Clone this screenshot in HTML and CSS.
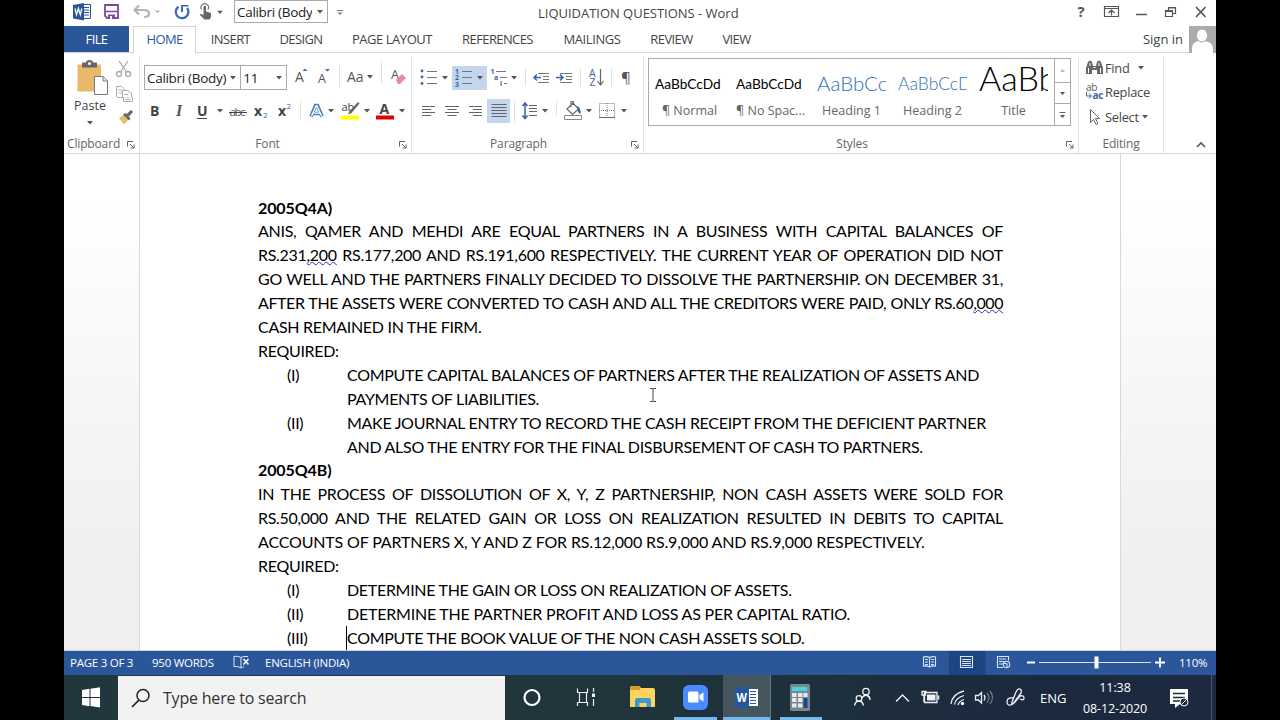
FILE: index.html
```html
<!DOCTYPE html>
<html>
<head>
	<meta charset="utf-8" />
	<title>LIQUIDATION QUESTIONS - Word</title>
	<link rel="stylesheet" href="styles.css">
</head>
<body>
	<svg class="defs">
		<symbol id="caret" viewBox="0 0 6 4"><path d="M0 0h6L3 3.6z" fill="#555"/></symbol>
		<symbol id="launcher" viewBox="0 0 8 8"><path d="M.5 5.500V.5H6M3 3l4 4M7 3.500V7H3.500" fill="none" stroke="#666"/></symbol>
	</svg>
	<div id="app">
		<!-- title bar -->
		<div class="titlebar">
			<svg width="170" height="26" viewBox="64 0 170 26">
				<path d="M83 4.500h7.500v14H83z" fill="#fff" stroke="#2b579a"/>
				<path d="M84 7.500h5M84 10h5M84 12.500h5M84 15h5" stroke="#2b579a"/>
				<path d="M73 5l11-2v17.500l-11-2z" fill="#2b579a"/>
				<path d="M75 8.500l1.500 6 1.900-6 1.900 6 1.500-6" fill="none" stroke="#fff" stroke-width="1.300"/>
				<path d="M105 5h13v13h-11l-2-2z" fill="#fff" stroke="#80489c" stroke-width="1.800"/>
				<path d="M105 11.500h13" stroke="#80489c" stroke-width="1.500"/>
				<path d="M108 14.500h7v4h-7z" fill="#80489c"/><path d="M110 16h2v3h-2z" fill="#fff"/>
				<path d="M139 5.500l-4.500 4.500 4.500 4.500M135 10h8q6 0 6 3.500T144 17" fill="none" stroke="#b3b3b3" stroke-width="2.200"/>
				<path d="M155 10.500h5l-2.500 2.800z" fill="#b3b3b3"/>
				<path d="M178.500 6.700A6.300 6.300 0 1 0 187 8" fill="none" stroke="#3a6db0" stroke-width="2.300"/>
				<path d="M181 5h7.500v1.500h-5.500v5.500h-2z" fill="#3a6db0"/>
				<path d="M201.500 9.500a3.800 3.800 0 1 1 6.500 0" fill="none" stroke="#777" stroke-width="1.200"/>
				<path d="M203.500 6.500q1.300-1.300 2.500 0v5l5 1.500v4l-1.500 2.500h-5l-5-5q1-1.200 4 .5z" fill="#666"/>
				<use href="#caret" x="217" y="10.500" width="6" height="4"/>
			</svg>
			<div class="combo qat-font"><span>Calibri (Body</span><svg width="6" height="4"><use href="#caret"/></svg></div>
			<svg width="24" height="26" viewBox="328 0 24 26"><path d="M337 10.500h6" stroke="#777"/><path d="M337.500 12.500h5L340 15z" fill="#777"/></svg>
			<div class="doc-title">LIQUIDATION QUESTIONS - Word</div>
			<svg width="146" height="26" viewBox="1070 0 146 26">
				<text x="1077.500" y="17" class="help">?</text>
				<g fill="none" stroke="#555">
					<path d="M1104.500 6.500h14v10h-14zM1104.500 8.500h14M1111.500 15.500v-5M1108.500 13l3-3 3 3" stroke-width="1.200"/>
					<path d="M1136 14.500h11" stroke-width="1.500"/>
					<path d="M1165.500 10.500h7v6h-7zM1165.500 11.500h7M1168.500 10V7.500h7v6h-3M1168.500 8h7" stroke-width="1.200"/>
					<path d="M1196 7l9.500 10M1205.500 7l-9.500 10" stroke-width="1.700"/>
				</g>
			</svg>
		</div>

		<!-- ribbon tabs -->
		<div class="tabs">
			<div class="tab file">FILE</div>
			<div class="tab home">HOME</div>
			<div class="tab t-insert">INSERT</div>
			<div class="tab t-design">DESIGN</div>
			<div class="tab t-layout">PAGE LAYOUT</div>
			<div class="tab t-ref">REFERENCES</div>
			<div class="tab t-mail">MAILINGS</div>
			<div class="tab t-review">REVIEW</div>
			<div class="tab t-view">VIEW</div>
			<div class="signin">Sign in</div>
			<svg width="27" height="27" viewBox="0 0 27 27"><path d="M0 0h27v27H0z" fill="#ababab"/><path d="M3 27v-5q0-6 7-7h6q8 1 8 8v4z" fill="#fff"/><ellipse cx="13" cy="9.500" rx="5.500" ry="6.500" fill="#fff" stroke="#ababab"/></svg>
		</div>

		<!-- ribbon -->
		<div class="ribbon">
			<div class="group clipboard">
				<svg width="75" height="42" viewBox="64 55 75 42">
					<path d="M77.500 64.500h23.500v27H77.500z" fill="#e8b968"/>
					<path d="M82 67.500v-5h4q0-2.500 3.500-2.500t3.500 2.500h4v5z" fill="#666"/><circle cx="89.500" cy="63.500" r="1.500" fill="#fff"/>
					<path d="M94.500 76.500h8.500l4.500 4.500v13.500h-13zM103 76.500v4.500h4.500" fill="#fff" stroke="#777"/>
					<g fill="none" stroke="#aaa" stroke-width="1.300"><path d="M119 61l7.500 11M128 61l-7.500 11"/><circle cx="119" cy="74" r="2.500"/><circle cx="128" cy="74" r="2.500"/></g>
					<path d="M116.500 97v-10.500h5l3 3v7.500M118.500 90h4M118.500 93h4" fill="#fff" stroke="#aaa"/>
					<path d="M122.500 98v-7.500h5l4 3v5M124.500 94.500h4" fill="#fff" stroke="#aaa"/>
				</svg>
				<div class="paste-row"><span>Paste</span>
					<svg width="24" height="34" viewBox="114 97 24 34">
						<path d="M116.500 97v.5h5.500M122.500 97v4.500h9V97M124.500 97h5M124.500 99.500h5" fill="none" stroke="#aaa"/>
						<path d="M118 118l5-3.500 5 4.500-5 5.500z" fill="#e3bd6c"/><path d="M122 114.500l6 6 1.500-2-5-5.500zM125.500 114l4.500-4 2 2-4 4.500z" fill="#666"/>
					</svg>
				</div>
				<svg class="paste-caret" width="6" height="4"><use href="#caret"/></svg>
				<div class="label">Clipboard<svg width="8" height="8"><use href="#launcher"/></svg></div>
			</div>

			<div class="group font">
				<div class="row row1">
					<div class="combo face"><span>Calibri (Body)</span><svg width="6" height="4"><use href="#caret"/></svg></div>
					<div class="combo size"><span>11</span><svg width="6" height="4"><use href="#caret"/></svg></div>
					<svg width="124" height="32" viewBox="287 62 124 32">
						<text x="295" y="83" class="ic">A</text><path d="M302.500 72h5l-2.500-2.500z" fill="#3a6db0"/>
						<text x="318" y="84" class="ic sm">A</text><path d="M325 70h5l-2.500 2.500z" fill="#3a6db0"/>
						<path d="M339.500 67v21M381.500 63v22" stroke="#e1e1e1"/>
						<text x="347" y="82.500" class="ic">Aa</text><use href="#caret" x="367" y="76" width="6" height="4"/>
						<text x="391" y="80" class="ic sm">A</text>
						<path d="M396 81l6-6 4 4-6 6h-2z" fill="#e8899f"/>
					</svg>
				</div>
				<div class="row row2">
					<svg width="271" height="32" viewBox="140 95 271 32">
						<text x="150" y="116" class="ic b">B</text>
						<text x="176" y="116" class="ic i">I</text>
						<text x="197" y="116" class="ic b">U</text><path d="M197 118.500h10" stroke="#444"/>
						<use href="#caret" x="217" y="109" width="6" height="4"/>
						<text x="229.500" y="116" class="ic abc" textLength="16">abc</text><path d="M229 112.500h18" stroke="#444"/>
						<text x="254" y="115.500" class="ic b">x</text><text x="263" y="118" class="tiny blue">2</text>
						<text x="278" y="115.500" class="ic b">x</text><text x="286.500" y="109" class="tiny blue">2</text>
						<path d="M300.500 101v18" stroke="#e1e1e1"/>
						<path d="M311 116.500l4.500-11h2l4.500 11M313 113.500h7" fill="none" stroke="#4a80bd" stroke-width="3.600"/>
						<path d="M311.500 116l4.500-10h1l4.500 10M313 113.200h7" fill="none" stroke="#fff" stroke-width="1.300"/>
						<use href="#caret" x="328" y="109" width="6" height="4"/>
						<text x="341.500" y="111" class="ab">ab</text>
						<path d="M358 102l1.500 1.500-8 9.500-3.500 1.500 1.500-3.500z" fill="#666"/>
						<path d="M341 115.500h18v4h-18z" fill="#ff0"/>
						<use href="#caret" x="364" y="109" width="6" height="4"/>
						<text x="379.500" y="114" class="ic b">A</text><path d="M376 115.500h18v4h-18z" fill="#e60000"/>
						<use href="#caret" x="399" y="109" width="6" height="4"/>
					</svg>
				</div>
				<div class="label">Font<svg width="8" height="8"><use href="#launcher"/></svg></div>
			</div>

			<div class="group para">
				<svg width="231" height="74" viewBox="412 55 231 74">
					<path d="M452 66h35v24h-35zM487 99h23v24h-23z" fill="#c4d5ee"/>
					<g fill="#3f64a5"><circle cx="422" cy="71" r="1.400"/><circle cx="422" cy="77" r="1.400"/><circle cx="422" cy="83.500" r="1.400"/></g>
					<path d="M427 71.500h10M427 77.500h10M427 83.500h10M462 71.500h10M462 77.500h10M462 83.500h10M496 71.500h10M500 77.500h7M504 83.500h3" stroke="#777"/>
					<text x="455" y="73.500" class="num">1</text><text x="455" y="80" class="num">2</text><text x="455" y="86.500" class="num">3</text>
					<text x="490.500" y="74" class="num">1</text><text x="494" y="80" class="num">a</text><text x="500" y="86" class="num">i</text>
					<use href="#caret" x="442" y="76" width="6" height="4"/><use href="#caret" x="477" y="76" width="6" height="4"/><use href="#caret" x="511" y="76" width="6" height="4"/>
					<path d="M525.500 68v18M580.500 68v18M611.500 68v18M514.500 101v22M556.500 101v15" stroke="#e1e1e1"/>
					<path d="M538 73.500h11M543 76.500h6M543 79.500h6M538 82.500h11M560 73.500h12M566 76.500h6M566 79.500h6M560 82.500h12" stroke="#777"/>
					<path d="M534 77.500h7M537 74.500l-3 3 3 3M556 77.500h7M560 74.500l3 3-3 3" fill="none" stroke="#3a64a5" stroke-width="1.500"/>
					<text x="589" y="77" class="az">A</text><text x="589.500" y="86" class="az">Z</text>
					<path d="M600.500 69v15M597.500 81l3 4 3-4" fill="none" stroke="#666" stroke-width="1.200"/>
					<text x="621" y="83" class="pil">¶</text>
					<g stroke="#666">
						<path d="M422 106.500h13M422 109.500h9M422 112.500h13M422 115.500h9M445 106.500h14M447.500 109.500h9M445 112.500h14M447.500 115.500h9M469 106.500h13M473 109.500h9M469 112.500h13M473 115.500h9"/>
						<path d="M491.500 104.500h15M491.500 107.500h15M491.500 110.500h15M491.500 113.500h15M491.500 116.500h15"/>
						<path d="M529 105.500h8M529 108.500h8M529 111.500h8M529 115.500h8"/>
					</g>
					<path d="M525 103v15M522.500 106l2.500-3 2.500 3M522.500 115.500l2.500 3 2.500-3" fill="none" stroke="#3a64a5" stroke-width="1.500"/>
					<use href="#caret" x="542" y="109" width="6" height="4"/>
					<path d="M567 109l6-6 5.500 6-6 5.500zM571 107v-5q1.500-1.500 2.500 0v3" fill="#fff" stroke="#666" stroke-width="1.200"/>
					<path d="M577 106q4 1 3.500 8-3-1-3-5z" fill="#3f64a5"/>
					<path d="M564.500 115.500h17v4h-17z" fill="#fff" stroke="#888"/>
					<use href="#caret" x="586" y="109" width="6" height="4"/>
					<path d="M599.500 103.500h15v14h-15zM607 103v14M599 110.500h16" fill="none" stroke="#777" stroke-dasharray="1 1"/><path d="M599 117.500h16" stroke="#666"/>
					<use href="#caret" x="621" y="109" width="6" height="4"/>
				</svg>
				<div class="label">Paragraph<svg width="8" height="8"><use href="#launcher"/></svg></div>
			</div>

			<div class="group styles">
				<div class="gallery">
					<div class="style"><div class="sample">AaBbCcDd</div><div class="name">¶ Normal</div></div>
					<div class="style"><div class="sample">AaBbCcDd</div><div class="name">¶ No Spac...</div></div>
					<div class="style"><div class="sample h1">AaBbCc</div><div class="name">Heading 1</div></div>
					<div class="style"><div class="sample h2">AaBbCcD</div><div class="name">Heading 2</div></div>
					<div class="style"><div class="sample ttl">AaBb</div><div class="name">Title</div></div>
					<svg width="16" height="66" viewBox="0 0 16 66"><path d="M.5 0v66M0 23.500h16M0 44.500h16" stroke="#ababab"/><path d="M6 13h5l-2.500-3z" fill="#bbb"/><path d="M6 33h5l-2.500 3zM6 56h5l-2.500 3z" fill="#555"/><path d="M5.500 53.500h6" stroke="#666"/></svg>
				</div>
				<div class="label">Styles<svg width="8" height="8"><use href="#launcher"/></svg></div>
			</div>

			<div class="group editing">
				<div class="cmd">
					<svg width="19" height="16" viewBox="0 0 19 16"><path d="M3 2q2-3 4 0l1 4h3l1-4q2-3 4 0l2 6v6h-6v-4H7v4H1V8z" fill="#666"/><path d="M3.500 8v5M15.500 8v5M8.500 7.500h2M5 3v3M14 3v3" stroke="#fff"/></svg>
					<span>Find</span><svg width="6" height="4"><use href="#caret"/></svg>
				</div>
				<div class="cmd">
					<svg width="19" height="18" viewBox="0 0 19 18"><text x="1" y="8" class="rep">ab</text><text x="7.500" y="16" class="rep blue">ac</text><path d="M1.500 9v4H6M4 10.500l2.500 2.500L4 15.500" fill="none" stroke="#3a64a5"/></svg>
					<span>Replace</span>
				</div>
				<div class="cmd">
					<svg width="19" height="18" viewBox="0 0 19 18"><path d="M5.500 1.500v13l3-3 2.500 5 2-1-2.500-5h4z" fill="#fff" stroke="#666"/></svg>
					<span class="sel">Select</span><svg width="6" height="4"><use href="#caret"/></svg>
				</div>
				<div class="label">Editing</div>
			</div>
			<svg class="collapse" width="10" height="7" viewBox="0 0 10 7"><path d="M1 6l4-4 4 4" fill="none" stroke="#555" stroke-width="1.600"/></svg>
		</div>

		<!-- document -->
		<div class="workspace">
			<div class="page">
				<h2>2005Q4A)</h2>
				<p class="full">ANIS, QAMER AND MEHDI ARE EQUAL PARTNERS IN A BUSINESS WITH CAPITAL BALANCES OF</p>
				<p class="full">RS.231<u>,200</u> RS.177,200 AND RS.191,600 RESPECTIVELY. THE CURRENT YEAR OF OPERATION DID NOT</p>
				<p class="full">GO WELL AND THE PARTNERS FINALLY DECIDED TO DISSOLVE THE PARTNERSHIP. ON DECEMBER 31,</p>
				<p class="full tight">AFTER THE ASSETS WERE CONVERTED TO CASH AND ALL THE CREDITORS WERE PAID, ONLY RS.60<u>,000</u></p>
				<p>CASH REMAINED IN THE FIRM.</p>
				<p>REQUIRED:</p>
				<div class="item"><span>(I)</span><p>COMPUTE CAPITAL BALANCES OF PARTNERS AFTER THE REALIZATION OF ASSETS AND<br>PAYMENTS OF LIABILITIES.</p></div>
				<div class="item"><span>(II)</span><p>MAKE JOURNAL ENTRY TO RECORD THE CASH RECEIPT FROM THE DEFICIENT PARTNER<br>AND ALSO THE ENTRY FOR THE FINAL DISBURSEMENT OF CASH TO PARTNERS.</p></div>
				<h2>2005Q4B)</h2>
				<p class="full">IN THE PROCESS OF DISSOLUTION OF X, Y, Z PARTNERSHIP, NON CASH ASSETS WERE SOLD FOR</p>
				<p class="full">RS.50,000 AND THE RELATED GAIN OR LOSS ON REALIZATION RESULTED IN DEBITS TO CAPITAL</p>
				<p class="loose">ACCOUNTS OF PARTNERS X, Y AND Z FOR RS.12,000 RS.9,000 AND RS.9,000 RESPECTIVELY.</p>
				<p>REQUIRED:</p>
				<div class="item"><span>(I)</span><p>DETERMINE THE GAIN OR LOSS ON REALIZATION OF ASSETS.</p></div>
				<div class="item"><span>(II)</span><p class="loose2">DETERMINE THE PARTNER PROFIT AND LOSS AS PER CAPITAL RATIO.</p></div>
				<div class="item"><span>(III)</span><p class="caret-line">COMPUTE THE BOOK VALUE OF THE NON CASH ASSETS SOLD.</p></div>
			</div>
			<svg class="ibeam" width="8" height="16" viewBox="0 0 8 16"><path d="M1 1.500h2.500L4 2l.5-.5H7M1 14.500h2.500L4 14l.5.500H7M4 2v12" fill="none" stroke="#444"/></svg>
		</div>

		<!-- status bar -->
		<div class="status">
			<span class="s-page">PAGE 3 OF 3</span>
			<span class="s-words">950 WORDS</span>
			<svg class="s-proof" width="17" height="14" viewBox="0 0 17 14"><path d="M8 2.500Q5 .5 1 1.500v10q4-.5 7 1.500 1-1 3-1.300M8 2.500V13M8 2.500Q10 1 15 1.500" fill="none" stroke="#dce6f5"/><path d="M10.500 4l5 5.500M15.500 4l-5 5.500" stroke="#fff" stroke-width="1.500"/></svg>
			<span class="s-lang">ENGLISH (INDIA)</span>
			<svg class="views" width="267" height="24" viewBox="911 651 267 24">
				<path d="M949 651h36.500v24H949z" fill="#1d4583"/>
				<g fill="none" stroke="#d7e4f7" stroke-width="1.100">
					<path d="M929.500 657.500q-3-1.500-6-.5v9q3-.5 6 1 3-1.500 6-1v-9q-3-1-6 .5v10M925 659.500h3M925 662h3M925 664.500h3M931 659.500h3M931 662h3M931 664.500h3"/>
					<path d="M960.500 656.500h12v11h-12zM962 659.500h9M962 661.500h9M962 663.500h9M962 665.500h9"/>
					<path d="M1003 667.500h-5.500v-11h11v4M999 659h7M999 661.500h5M999 664h4"/>
					<circle cx="1006.500" cy="664.500" r="3.200"/><path d="M1004 663l3 1v3"/>
					<path d="M1039 662.500h112"/>
				</g>
				<path d="M1027 662.500h8M1155 662.500h10M1160 657.500v10" stroke="#fff" stroke-width="1.800"/>
				<path d="M1094.500 656.500h4v12h-4z" fill="#fff"/>
			</svg>
			<span class="zoom">110%</span>
		</div>

		<!-- windows taskbar -->
		<div class="taskbar">
			<svg width="54" height="45" viewBox="64 675 54 45"><path d="M82 690l7.500-1.200v8.200H82zM90.500 688.700l9.500-1.400v9.700h-9.500zM82 698h7.500v8.200L82 705zM90.500 698h9.500v9.500l-9.500-1.400z" fill="#fff"/></svg>
			<div class="search">
				<svg width="20" height="20" viewBox="0 0 20 20"><circle cx="12" cy="7.500" r="6" fill="none" stroke="#222" stroke-width="1.500"/><path d="M8 12l-7 7" stroke="#222" stroke-width="1.700"/></svg>
				<span>Type here to search</span>
			</div>
			<svg width="535" height="45" viewBox="505 675 535 45">
				<circle cx="532" cy="697.500" r="7.500" fill="none" stroke="#fff" stroke-width="2.200"/>
				<g fill="none" stroke="#e8eef0" stroke-width="1.200">
					<path d="M577 692.500h11M577 702.500h11M579.500 692.500v10M586.500 692.500v10M577.500 688.500v4M587.500 688.500v4M577.500 702.500v3.500M587.500 702.500v3.500M593.500 688v4M593.500 699v7"/><path d="M593.500 693.500v3.500" stroke-width="3"/>
				</g>
				<path d="M630 688q0-2 2-2h7l2 2h12q2 0 2 2v17h-25z" fill="#ffd45e"/><path d="M630 688q0-2 2-2h7l2 2-2 2h-9z" fill="#d79c22"/>
				<path d="M635 707v-7q0-2 2-2h12q2 0 2 2v7h-4.500v-4h-7v4z" fill="#4297cb"/>
				<rect x="683" y="685" width="25" height="25" rx="6" fill="#4a8cff"/>
				<path d="M688 693q0-1.500 1.500-1.500h7.500q1.500 0 1.500 1.500v9.500h-9q-1.500 0-1.500-1.500zM699.500 695l4-2.500v9l-4-2.500z" fill="#fff"/>
				<path d="M723 675h47v45h-47z" fill="#46565f"/><path d="M770.500 675v45" stroke="#65737a"/>
				<path d="M748 689h10v17h-10z" fill="#fff"/><path d="M750 691.500h6M750 694.500h6M750 697.500h6M750 700.500h6M750 703.500h6" stroke="#2b579a"/>
				<path d="M735 688.500l14-2.500v23l-14-2.500z" fill="#2855a0"/><text x="736.500" y="702" class="w" textLength="10.500" lengthAdjust="spacingAndGlyphs">W</text>
				<rect x="790" y="684" width="20" height="27" rx="1.500" fill="#7a8790"/><path d="M792 687h15v4h-15z" fill="#4ed0e8"/>
				<path d="M792 693h4.500v4H792zM798 693h4.500v4H798zM803.500 693h4v4h-4zM792 698h4.500v4H792zM798 698h4.500v4H798zM792 703.500h4.500v4H792zM798 703.500h4.500v4H798z" fill="#e6e9eb"/><path d="M803.500 698h4v10h-4z" fill="#174a8a"/>
				<path d="M674 717h43v3h-43zM723 717h47v3h-47zM780 717h42v3h-42z" fill="#76b9ed"/>
				<g fill="none" stroke="#eef2f5" stroke-width="1.300">
					<circle cx="866" cy="691.500" r="3.200"/><path d="M861.500 698q4.500-5.500 8.500 0"/><circle cx="859" cy="698.500" r="2.800"/><path d="M854.500 705.500q1-4.500 4.500-4.500t4.500 4.500"/><path d="M866 695q4 1 4 5"/>
					<path d="M896 701.500l6.500-6.500 6.500 6.500"/>
					<path d="M924.500 692.500h12.500v10h-12.500z"/><path d="M921.500 691.500h5M922 691.500v3.500h3.500v-3.500M924 695v7"/><path d="M938.500 695.500v4" stroke-width="1.500"/>
					<path d="M951 704q1-10 13-13M954.500 704.500q1-6.500 9.500-9M958 705q1-4 6-5.500"/>
					<path d="M975.500 695.500h3l3-3v10.500l-3-3h-3zM984 695q2 2.500 0 5.500"/><path d="M987 693q4 4.500 0 9.500M990 691q5 6.500 0 13" stroke="#6b7b88"/>
					<path d="M1013 698q-6-1-6 4t6 2l8-11q1-3-1-4t-4 3l-4 10q-1 4 3 0l5-6q4-1 4 2t-4 1"/>
				</g>
				<path d="M927 694.500h8.500v6h-8.500z" fill="#eef2f5"/><circle cx="962.500" cy="703.500" r="1.700" fill="#fff"/>
			</svg>
			<span class="lang">ENG</span>
			<div class="clock"><span>11:38</span><span>08-12-2020</span></div>
			<svg width="62" height="45" viewBox="1154 675 62 45"><path d="M1170 689h18v15h-8l-5 4v-4h-5z" fill="#fff"/><path d="M1173 693.500h12M1173 697.500h12M1173 701h7" stroke="#1c2a3d" stroke-width="1.300"/><circle cx="1184" cy="702" r="4" fill="#1c2a3d" stroke="#fff"/><path d="M1181.500 704.500l5-5" stroke="#fff"/><path d="M1211.500 675v45" stroke="#4a5666"/></svg>
		</div>
	</div>
</body>
</html>
```
FILE: styles.css
```css
*{
	margin: 0;
	padding: 0;
	box-sizing: border-box;
}
body{
	background: #000;
	overflow: hidden;
}
svg{
	display: block;
	flex: none;
}
.defs{
	position: absolute;
	width: 0;
	height: 0;
}
#app{
	width: 1152px;
	height: 720px;
	margin: 0 auto;
	background: #fff;
	display: flex;
	flex-direction: column;
	overflow: hidden;
	font-family: "Open Sans", "Noto Sans", sans-serif;
	font-size: 12px;
	color: #444;
	white-space: nowrap;
}
/* title bar */
.titlebar{
	height: 26px;
	display: flex;
}
.combo{
	border: 1px solid #ababab;
	display: flex;
	align-items: center;
	justify-content: space-between;
	padding: 0 4px 0 2px;
	height: 25px;
	color: #222;
	font-size: 13.500px;
	letter-spacing: -0.3px;
}
.combo span{
	overflow: hidden;
}
.qat-font{
	width: 94px;
	height: 23px;
}
.doc-title{
	flex: 1;
	padding-left: 186px;
	line-height: 26px;
	font-size: 13px;
	letter-spacing: -0.02px;
}
.help{
	font-size: 15px;
	font-weight: bold;
	fill: #555;
}
/* tabs */
.tabs{
	height: 27px;
	display: flex;
	line-height: 27px;
	font-size: 13px;
	letter-spacing: -0.6px;
	border-bottom: 1px solid #d4d4d4;
}
.tab{
	text-align: center;
}
.file{
	width: 65px;
	background: #2b579a;
	color: #fff;
}
.home{
	width: 63px;
	margin-left: 4px;
	height: 27px;
	background: #fff;
	border: 1px solid #d4d4d4;
	border-bottom: 0;
	line-height: 25px;
	color: #2b579a;
}
.t-insert{
	width: 69px;
}
.t-design{
	width: 72px;
}
.t-layout{
	width: 110px;
	letter-spacing: -0.45px;
}
.t-ref{
	width: 101px;
}
.t-mail{
	width: 88px;
	letter-spacing: -0.4px;
}
.t-review{
	width: 71px;
}
.t-view{
	width: 59px;
}
.signin{
	flex: 1;
	text-align: right;
	padding-right: 6px;
	letter-spacing: 0;
}
/* ribbon */
.ribbon{
	height: 101px;
	padding-top: 2px;
	display: flex;
	border-bottom: 1px solid #d4d4d4;
}
.group{
	display: flex;
	flex-direction: column;
	height: 96px;
	margin-top: 2px;
	border-right: 1px solid #e1e1e1;
}
.clipboard{
	width: 76px;
	margin-top: 0;
	height: 98px;
}
.clipboard .paste-row{
	display: flex;
	height: 23px;
	justify-content: space-between;
	padding-left: 10px;
	line-height: 18px;
	font-size: 12.500px;
}
.paste-caret{
	margin: 1px 0 0 23px;
}
.label{
	position: relative;
	margin-top: auto;
	height: 18px;
	line-height: 18px;
	text-align: center;
	color: #666;
	letter-spacing: -0.15px;
}
.label svg{
	position: absolute;
	right: 4px;
	top: 6px;
}
.clipboard .label{
	text-align: left;
	padding-left: 3px;
}
.font{
	width: 272px;
}
.font .label{
	padding-right: 16px;
}
.row{
	display: flex;
}
.row1{
	height: 32px;
	margin-top: 4px;
}
.row2{
	margin-top: 2px;
}
.face{
	width: 98px;
	margin: 4px 0 0 4px;
}
.face span{
	width: 81px;
}
.size{
	width: 47px;
	margin: 4px 0 0 -1px;
}
.ic{
	font-size: 14px;
	fill: #555;
}
.sm{
	font-size: 12.500px;
}
.b{
	font-weight: bold;
	fill: #444;
}
.i{
	font-family: "Liberation Serif", serif;
	font-style: italic;
	font-weight: bold;
	font-size: 16px;
}
.abc{
	font-size: 11.500px;
}
.ab{
	font-size: 11px;
	fill: #444;
}
.tiny{
	font-size: 8px;
}
.blue{
	fill: #3a64a5;
}
.num{
	font-size: 7px;
	font-weight: bold;
	fill: #3f64a5;
}
.az{
	font-size: 10.500px;
	fill: #4a5c9c;
}
.pil{
	font-size: 15px;
	fill: #555;
}
.para{
	width: 232px;
}
.para > svg{
	margin-top: -2px;
}
.para .label{
	padding-right: 18px;
}
.styles{
	width: 435px;
}
.styles .label{
	padding-right: 18px;
}
.gallery{
	height: 68px;
	width: 423px;
	margin: 1px 0 0 4px;
	border: 1px solid #ababab;
	display: flex;
}
.style{
	width: 81px;
	padding: 0 6px;
	text-align: center;
}
.sample{
	height: 42px;
	padding-top: 7px;
	line-height: 35px;
	overflow: hidden;
	font-family: Lato, sans-serif;
	font-size: 13.700px;
	color: #000;
	text-align: left;
}
.h1{
	font-size: 20.500px;
	font-weight: 300;
	color: #2e74b5;
}
.h2{
	font-size: 17.500px;
	font-weight: 300;
	color: #2e74b5;
}
.ttl{
	font-size: 34px;
	font-weight: 300;
	line-height: 24px;
}
.name{
	line-height: 19px;
	font-size: 12.500px;
	color: #666;
	margin: 0 -6px;
}
.gallery > svg{
	margin-left: auto;
}
.editing{
	width: 85px;
}
.cmd{
	height: 24.300px;
	margin-top: -1px;
	margin-bottom: 1px;
	display: flex;
	align-items: center;
	padding-left: 6px;
	font-size: 12.800px;
	letter-spacing: -0.25px;
}
.cmd span{
	margin: 0 8px 0 1px;
}
.cmd .sel{
	margin-right: 3px;
}
.cmd + .cmd{
	margin-top: -1px;
}
.rep{
	font-size: 10px;
	fill: #555;
}
.rep.blue{
	fill: #3a64a5;
	font-weight: bold;
}
.collapse{
	margin: 86px 0 0 32px;
}
/* document */
.workspace{
	position: relative;
	height: 497px;
	background: linear-gradient(#fff 10%, #f7f7f7 45%, #efefef 85%);
	overflow: hidden;
	border-bottom: 1px solid #c8d3e5;
}
.page{
	width: 982px;
	height: 520px;
	margin-left: 75px;
	padding: 41.500px 118px 0;
	background: #fff;
	border: 1px solid #d9d9d9;
	border-top: 0;
	border-bottom: 0;
	font-family: Lato, sans-serif;
	font-size: 16px;
	line-height: 23.900px;
	color: #000;
	letter-spacing: -0.3px;
}
.page h2{
	font-size: 16px;
	letter-spacing: -0.1px;
}
.full{
	text-align-last: justify;
	white-space: normal;
	margin-right: -1px;
}
.tight{
	letter-spacing: -0.42px;
}
.loose{
	letter-spacing: -0.15px;
}
.loose2{
	letter-spacing: -0.22px;
}
.page u{
	text-decoration: underline wavy #2b2ba8 1px;
	text-decoration-skip-ink: none;
	text-underline-offset: 0;
}
.item{
	display: flex;
	padding-left: 29px;
}
.item span{
	width: 60px;
}
.caret-line{
	box-shadow: -1px 0 0 #000;
}
.ibeam{
	position: absolute;
	left: 585px;
	top: 233px;
}
/* status bar */
.status{
	height: 24px;
	background: #2b579a;
	color: #fff;
	display: flex;
	align-items: center;
	font-size: 11.500px;
	line-height: 15px;
	letter-spacing: -0.25px;
}
.status span{
	padding-bottom: 2px;
}
.s-page{
	width: 82px;
	margin-left: 6px;
}
.s-words{
	width: 81px;
}
.s-proof{
	margin-bottom: 2px;
}
.s-lang{
	margin-left: 15px;
}
.views{
	margin-left: auto;
}
.zoom{
	width: 38px;
	padding-left: 1px;
}
/* taskbar */
.taskbar{
	height: 45px;
	display: flex;
	align-items: center;
	background: linear-gradient(90deg, #22363d, #20343b 50%, #1b293e 85%, #1d2a40);
	color: #fff;
}
.search{
	width: 387px;
	height: 44px;
	background: #f2f2f3;
	display: flex;
	align-items: center;
	padding-left: 13px;
	color: #333;
	font-size: 16px;
	letter-spacing: -0.2px;
}
.search span{
	margin-left: 12px;
}
.lang{
	width: 36px;
	font-size: 13px;
}
.clock{
	width: 78px;
	display: flex;
	flex-direction: column;
	align-items: center;
	line-height: 21px;
	font-size: 12.500px;
	letter-spacing: -0.1px;
}
.w{
	font-size: 12px;
	font-weight: bold;
	fill: #fff;
}
```
